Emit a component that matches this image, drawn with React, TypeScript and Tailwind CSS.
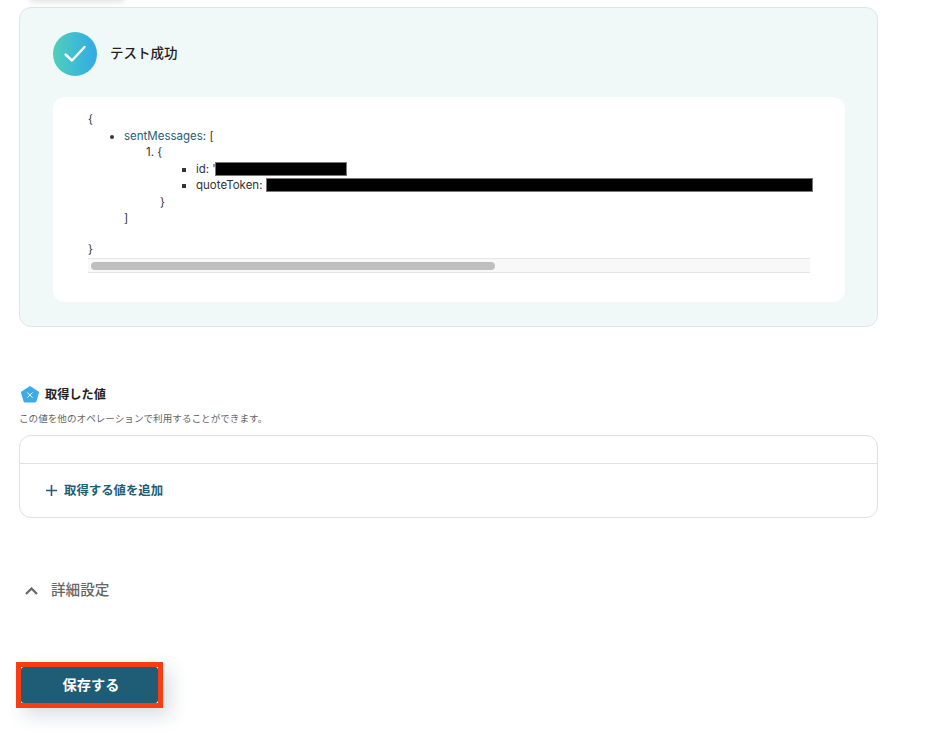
const fontStack = 'font-[Inter,"Noto_Sans_CJK_JP",sans-serif]';

function CheckBadge() {
  return (
    <div className="w-[44px] h-[44px] rounded-full bg-gradient-to-r from-[#4fcfbb] to-[#33a9e6] flex items-center justify-center flex-shrink-0">
      <svg width="24" height="20" viewBox="0 0 24 20" fill="none">
        <path d="M2.5 10.5 L9 16.5 L21.5 3" stroke="white" strokeWidth="2.4" strokeLinecap="round" strokeLinejoin="round" />
      </svg>
    </div>
  );
}

function VariableIcon() {
  return (
    <svg width="20" height="19" viewBox="0 0 20 19" className="flex-shrink-0">
      <path d="M10 1 L18.5 6.5 Q19.2 7 19 7.8 L16.4 16.4 Q16.1 17.5 15 17.5 L5 17.5 Q3.9 17.5 3.6 16.4 L1 7.8 Q0.8 7 1.5 6.5 Z" fill="#3cabe6" />
      <path d="M7.6 7.8 L12.2 12.4 M12.2 7.8 L7.6 12.4" stroke="white" strokeWidth="1" strokeLinecap="round" />
    </svg>
  );
}

function JsonPreview() {
  return (
    <div className="w-[722px] ml-[35px] text-[11.5px] leading-[16.5px] text-[#333333]">
      <div>{'{'}</div>
      <ul className="ml-[36px] list-disc">
        <li>
          <span className="text-[#1f5c75]">sentMessages</span>: [
          <div className="ml-[22px]">1. {'{'}</div>
          <ul className="ml-[72px] list-[square]">
            <li className="whitespace-nowrap h-[16.5px]">
              id: '<span className="inline-block align-top ml-[-1px] w-[132px] h-[14px] mt-[1px] bg-black border border-[#777777]" />
            </li>
            <li className="whitespace-nowrap h-[16.5px]">
              quoteToken: <span className="inline-block align-top w-[547px] h-[14px] mt-[1px] bg-black border border-[#777777]" />
            </li>
          </ul>
          <div className="ml-[36px]">{'}'}</div>
          <div>]</div>
        </li>
      </ul>
      <div className="mt-[14px]">{'}'}</div>
      <div className="mt-[1px] h-[15px] bg-[#f8f8f8] border-y border-[#e6e6e6] flex items-center px-[3px]">
        <div className="w-[404px] h-[8px] rounded-full bg-[#bfbfbf]" />
      </div>
    </div>
  );
}

export default function App() {
  return (
    <div className={`relative w-[930px] h-[746px] overflow-hidden bg-white pt-[7px] pl-[19px] ${fontStack}`}>
      {/* shadow left by the panel above the fold */}
      <div className="absolute left-[30px] top-[-12px] w-[95px] h-[12px] shadow-[0_2px_6px_rgba(0,0,0,0.12)]" />

      {/* Test result */}
      <section className="w-[859px] h-[320px] rounded-[12px] border border-[#e0e4e4] bg-[#f0f9f8] pl-[33px] pt-[24px]">
        <div className="flex items-center gap-[13px]">
          <CheckBadge />
          <h2 className="text-[13.5px] leading-[18px] mt-[-2px] font-medium text-[#222222]">テスト成功</h2>
        </div>
        <div className="mt-[21px] w-[792px] h-[205px] rounded-[12px] bg-white pt-[14px]">
          <JsonPreview />
        </div>
      </section>

      {/* Captured values */}
      <section className="mt-[57px] w-[859px]">
        <div className="flex items-center gap-[5px] h-[20px] ml-[1px]">
          <VariableIcon />
          <h3 className="text-[12.2px] leading-[18px] mt-[1px] font-bold text-[#222222]">取得した値</h3>
        </div>
        <p className="mt-[8px] text-[9.6px] leading-[14px] text-[#666666]">この値を他のオペレーションで利用することができます。</p>
        <div className="mt-[9px] h-[83px] rounded-[12px] border border-[#dfe1e3]">
          <div className="h-[28px] border-b border-[#dfe1e3]" />
          <div className="flex items-center gap-[6px] pl-[25px] h-[53px] text-[#1f5c75]">
            <svg width="13" height="13" viewBox="0 0 13 13" fill="none">
              <path d="M6.5 1 V12 M1 6.5 H12" stroke="#1f5c75" strokeWidth="1.6" />
            </svg>
            <span className="text-[12.4px] font-bold mt-[1px]">取得する値を追加</span>
          </div>
        </div>
      </section>

      {/* Advanced settings */}
      <div className="mt-[63px] ml-[6px] flex items-center gap-[13px] h-[20px] text-[#666666]">
        <svg width="13" height="8" viewBox="0 0 13 8" fill="none">
          <path d="M1 7 L6.5 1.5 L12 7" stroke="#666666" strokeWidth="2.2" />
        </svg>
        <span className="text-[14.6px] font-medium">詳細設定</span>
      </div>

      {/* Save */}
      <div className="mt-[61px] ml-[-3px] w-[147px] h-[46px] border-[5px] border-[#f73d11] bg-white shadow-[8px_8px_18px_rgba(31,60,80,0.16)]">
        <button className="block w-full h-full rounded-[3px] bg-[#1f5c75] text-white text-[14.2px] font-bold pl-[3px]">
          保存する
        </button>
      </div>
    </div>
  );
}
